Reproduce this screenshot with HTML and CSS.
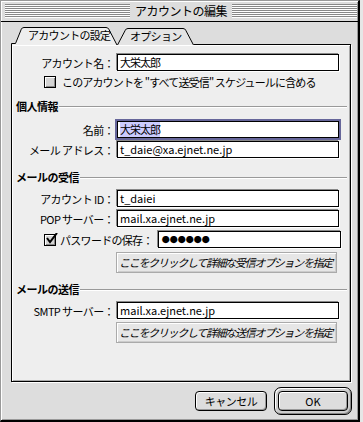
FILE: index.html
```html
<!DOCTYPE html>
<html lang="ja">
<head>
<meta charset="utf-8">
<link rel="stylesheet" href="styles.css">
</head>
<body>
<div class="window">
  <div class="titlebar">
    <div class="stripes"></div>
    <div class="title">アカウントの編集</div>
    <div class="stripes"></div>
  </div>
  <div class="tabs">
    <div class="tab tab-active">
      <svg class="tab-shape" width="107" height="18" viewBox="0 0 107 18">
        <path d="M0,18 L0,16 L4,16 L10,2 Q11,0 13,0 L95,0 Q97,0 98,2 L107,18 Z" fill="#eeeeee"/>
        <path d="M0.5,18 L0.5,16.5 L4.5,16.5 L10.3,2.2 Q11,0.5 13,0.5 L95,0.5 Q97,0.5 97.8,2.2 L106,18" fill="none" stroke="#000" stroke-width="1"/>
      </svg>
      <span class="tab-label">アカウントの設定</span>
    </div>
    <div class="tab tab-back">
      <svg class="tab-shape" width="77" height="17" viewBox="0 0 77 17">
        <path d="M0,17 L8,2 Q9,0 11,0 L66,0 Q68,0 69,2 L77,17 Z" fill="#e4e4e4"/>
        <path d="M0.5,17 L8.3,2.2 Q9,0.5 11,0.5 L66,0.5 Q68,0.5 68.7,2.2 L76.5,17" fill="none" stroke="#000" stroke-width="1"/>
      </svg>
      <span class="tab-label">オプション</span>
    </div>
  </div>
  <div class="panel">
    <div class="form-grid first">
      <span class="label">アカウント名：</span>
      <div class="field">大栄太郎</div>
    </div>
    <div class="check-row">
      <span class="checkbox"></span>
      <span>このアカウントを "すべて送受信" スケジュールに含める</span>
    </div>

    <div class="section s1"><span class="section-title">個人情報</span><span class="rule"></span></div>
    <div class="form-grid g2">
      <span class="label">名前：</span>
      <div class="field focused"><span class="selected">大栄太郎</span></div>
      <span class="label">メール アドレス：</span>
      <div class="field latin">t_daie@xa.ejnet.ne.jp</div>
    </div>

    <div class="section s2"><span class="section-title">メールの受信</span><span class="rule"></span></div>
    <div class="form-grid g3">
      <span class="label">アカウント ID：</span>
      <div class="field latin">t_daiei</div>
      <span class="label">POP サーバー：</span>
      <div class="field latin">mail.xa.ejnet.ne.jp</div>
    </div>
    <div class="pw-row">
      <span class="checkbox checked"><svg width="13" height="12" viewBox="0 0 13 12"><path d="M2,5 L5,9 L12,0" fill="none" stroke="#000" stroke-width="2"/></svg></span>
      <span class="pw-label">パスワードの保存：</span>
      <div class="field pw">●●●●●●</div>
    </div>
    <div class="opt-btn b1">ここをクリックして詳細な受信オプションを指定</div>

    <div class="section s3"><span class="section-title">メールの送信</span><span class="rule"></span></div>
    <div class="form-grid g4">
      <span class="label">SMTP サーバー：</span>
      <div class="field latin">mail.xa.ejnet.ne.jp</div>
    </div>
    <div class="opt-btn b2">ここをクリックして詳細な送信オプションを指定</div>
  </div>
  <div class="buttons">
    <div class="push">キャンセル</div>
    <div class="ring"><div class="push ok">OK</div></div>
  </div>
</div>
</body>
</html>
```

FILE: styles.css
```css
* { box-sizing: border-box; }
html, body { margin: 0; padding: 0; }
body {
  width: 363px;
  height: 422px;
  overflow: hidden;
  background: #e6e6e6;
  font-family: "Noto Sans CJK JP", "Noto Sans", sans-serif;
  font-size: 11px;
  color: #000;
}
.window {
  width: 360px;
  height: 422px;
  background: #dddddd;
  border-left: 1px solid #999;
  border-top: 1px solid #999;
  border-right: 2px solid #000;
  border-bottom: 2px solid #000;
  box-shadow: inset 1px 1px 0 #fff, inset -1px -1px 0 #999;
}
.titlebar {
  height: 21px;
  border-bottom: 1px solid #000;
  display: flex;
  align-items: center;
  padding: 0 1px 0 4px;
  gap: 5px;
}
.stripes {
  flex: 1;
  height: 14px;
  background: repeating-linear-gradient(to bottom, #888 0 1px, #fff 1px 2px);
}
.title {
  letter-spacing: -0.5px;
  line-height: 14px;
  font-size: 12px;
}
.tabs {
  display: flex;
  align-items: flex-end;
  height: 17px;
  margin: 5px 0 0 10px;
  position: relative;
  z-index: 1;
}
.tab {
  position: relative;
  height: 17px;
}
.tab-active {
  width: 107px;
  height: 18px;
  margin-bottom: -1px;
}
.tab-back {
  width: 77px;
  height: 16px;
  margin-left: -1px;
}
.tab-shape {
  position: absolute;
  left: 0;
  top: 0;
}
.tab-label {
  position: relative;
  display: block;
  line-height: 17px;
  letter-spacing: -0.7px;
}
.tab-active .tab-label { padding-left: 17px; }
.tab-back .tab-label { padding-left: 13px; line-height: 16px; }

.panel {
  margin-left: 10px;
  width: 340px;
  height: 338px;
  background: #eeeeee;
  border: 1px solid #000;
  box-shadow: inset 1px 1px 0 #fff, inset -1px -1px 0 #aaa, 1px 1px 0 #fff;
  display: flex;
  flex-direction: column;
}
.form-grid {
  display: grid;
  grid-template-columns: 102px 222px;
  column-gap: 3px;
  row-gap: 3px;
  align-items: center;
}
.label {
  text-align: right;
  letter-spacing: -0.6px;
  white-space: nowrap;
}
.field {
  height: 17px;
  background: #fff;
  border: 1px solid #000;
  box-shadow: -1px -1px 0 #888, 1px 1px 0 #fff;
  line-height: 15px;
  padding-left: 2px;
  white-space: nowrap;
  overflow: hidden;
  letter-spacing: -1px;
}
.field.latin { letter-spacing: 0; }
.field.focused {
  box-shadow: 0 0 0 2px #66669a;
}
.selected { background: #ccccff; }
.first { margin-top: 9px; }
.check-row {
  margin-top: 4px;
  height: 13px;
  display: flex;
  align-items: center;
  gap: 6px;
  padding-left: 32px;
  letter-spacing: -0.85px;
  white-space: nowrap;
}
.checkbox {
  width: 12px;
  height: 12px;
  border: 1px solid #000;
  background: #d4d4d4;
  box-shadow: inset 1px 1px 0 #fff, inset -1px -1px 0 #888;
  position: relative;
  flex: none;
}
.checkbox svg { position: absolute; left: 0; top: -2px; }
.section {
  height: 13px;
  display: flex;
  align-items: center;
  padding: 0 3px 0 4px;
  gap: 1px;
}
.section-title {
  font-weight: bold;
  letter-spacing: -0.5px;
  white-space: nowrap;
  line-height: 13px;
}
.rule {
  flex: 1;
  height: 1px;
  background: #999;
  box-shadow: 0 1px 0 #fff;
}
.s1 { margin-top: 12px; }
.g2 { margin-top: 8px; }
.s2 { margin-top: 13px; }
.g3 { margin-top: 6px; }
.pw-row {
  margin-top: 4px;
  display: flex;
  align-items: center;
  padding-left: 32px;
}
.pw-label { margin-left: 4px; letter-spacing: -0.7px; white-space: nowrap; }
.field.pw {
  margin-left: 5px;
  width: 183px;
  font-size: 8px;
  letter-spacing: 0;
  padding-left: 3px;
}
.opt-btn {
  margin-left: 104px;
  width: 221px;
  height: 21px;
  background: #e6e6e6;
  border: 1px solid #aaa;
  box-shadow: inset 1px 1px 0 #fff, inset -1px -1px 0 #ccc;
  line-height: 19px;
  padding-left: 2px;
  font-style: italic;
  letter-spacing: -1.3px;
  white-space: nowrap;
}
.b1 { margin-top: 4px; }
.s3 { margin-top: 10px; }
.g4 { margin-top: 6px; }
.b2 { margin-top: 3px; }

.buttons {
  display: flex;
  justify-content: flex-end;
  align-items: center;
  gap: 7px;
  margin-top: 5px;
  padding-right: 6px;
}
.push {
  width: 72px;
  height: 20px;
  border: 1px solid #000;
  border-radius: 4px;
  background: #dddddd;
  box-shadow: inset 1px 1px 0 #fff, inset -1px -1px 0 #999;
  text-align: center;
  line-height: 18px;
  letter-spacing: -0.5px;
}
.ring {
  width: 78px;
  height: 28px;
  border: 1px solid #000;
  border-radius: 7px;
  background: #cccccc;
  box-shadow: inset 1px 1px 0 #fff, inset -1px -1px 0 #888;
  padding: 3px;
}
.push.ok { width: 70px; letter-spacing: 0; }
```
